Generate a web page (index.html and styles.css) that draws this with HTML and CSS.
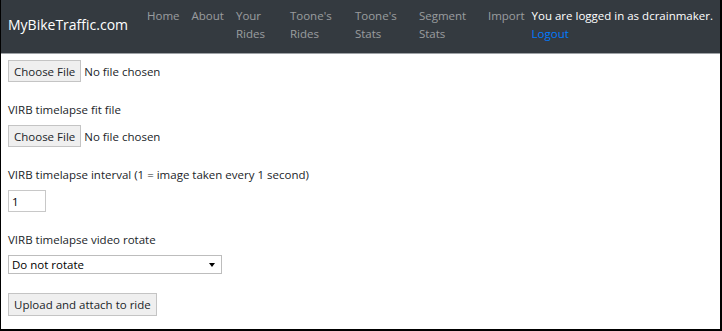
FILE: index.html
```html
<!DOCTYPE html>
<html lang="en">
<head>
    <meta charset="UTF-8">
    <title>MyBikeTraffic.com - Upload timelapse</title>
    <link rel="stylesheet" href="styles.css">
</head>
<body>
    <div class="frame">
        <!-- Top navigation -->
        <nav class="navbar">
            <a class="brand" href="#">MyBikeTraffic.com</a>
            <ul class="nav">
                <li><a class="nav-link" href="#">Home</a></li>
                <li><a class="nav-link" href="#">About</a></li>
                <li class="nav-wrap w-your"><a class="nav-link" href="#">Your Rides</a></li>
                <li class="nav-wrap w-rides"><a class="nav-link" href="#">Toone's Rides</a></li>
                <li class="nav-wrap w-stats"><a class="nav-link" href="#">Toone's Stats</a></li>
                <li class="nav-wrap w-segment"><a class="nav-link" href="#">Segment Stats</a></li>
                <li><a class="nav-link" href="#">Import</a></li>
            </ul>
            <div class="user">
                You are logged in as dcrainmaker.<br>
                <a class="logout" href="#">Logout</a>
            </div>
        </nav>

        <!-- Upload form -->
        <form class="upload-form" action="#" method="POST" enctype="multipart/form-data">
            <div class="form-group">
                <input type="file" name="video" class="file-input">
            </div>

            <div class="form-group">
                <label for="fit-file">VIRB timelapse fit file</label>
                <input type="file" name="fit" id="fit-file" class="file-input">
            </div>

            <div class="form-group">
                <label for="interval">VIRB timelapse interval (1 = image taken every 1 second)</label>
                <input type="text" name="interval" id="interval" class="num-input" value="1">
            </div>

            <div class="form-group">
                <label for="rotate">VIRB timelapse video rotate</label>
                <span class="select-wrap">
                    <select name="rotate" id="rotate" class="select">
                        <option>Do not rotate</option>
                        <option>Rotate 90</option>
                        <option>Rotate 180</option>
                        <option>Rotate 270</option>
                    </select>
                </span>
            </div>

            <button class="btn" type="submit">Upload and attach to ride</button>
        </form>
    </div>
</body>
</html>
```

FILE: styles.css
```css
:root {
    --nav-bg: #343a40;
    --nav-link: rgba(255, 255, 255, 0.5);
    --text: #212529;
    --link-blue: #007bff;
}

* {
    box-sizing: border-box;
    margin: 0;
    padding: 0;
}

body {
    background: #fff;
    color: var(--text);
    font-family: 'Open Sans', 'Noto Sans', sans-serif;
    font-size: 11.5px;
}

.frame {
    height: 331px;
    border-left: 1px solid #000;
    border-right: 2px solid #000;
    border-bottom: 2px solid #000;
    overflow: hidden;
}

/* navbar */
.navbar {
    display: flex;
    align-items: flex-start;
    background: var(--nav-bg);
    height: 54px;
    padding: 7px 0 0 7px;
    border-bottom: 1px solid #9ea2a6;
}

.brand {
    color: #fff;
    text-decoration: none;
    font-size: 14px;
    line-height: 36px;
    margin-right: 13px;
}

.nav {
    display: flex;
    list-style: none;
}

.nav-link {
    display: block;
    padding: 0 6px;
    color: var(--nav-link);
    text-decoration: none;
    line-height: 18px;
}

.nav-wrap .nav-link {
    padding-right: 0;
}

.w-your { width: 54px; }
.w-rides { width: 65px; }
.w-stats { width: 64px; }
.w-segment { width: 69px; }

.user {
    color: #fff;
    line-height: 18px;
    white-space: nowrap;
    margin-left: 1px;
}

.logout {
    color: var(--link-blue);
    text-decoration: none;
}

/* form */
.upload-form {
    padding: 6px 7px;
}

.form-group {
    margin-bottom: 19px;
}

.form-group label {
    display: block;
    line-height: 17px;
    margin-bottom: 7px;
}

.file-input {
    font: inherit;
    color: var(--text);
}

.file-input::file-selector-button {
    font: inherit;
    color: var(--text);
    height: 22px;
    padding: 0 5px;
    margin-right: 3px;
    background: #efefef;
    border: 1px solid #c4c4c4;
    border-radius: 0;
}

.num-input {
    font: inherit;
    width: 38px;
    height: 22px;
    padding: 0 3px;
    border: 1px solid #c8c8c8;
    color: #000;
}

.select-wrap {
    position: relative;
    display: inline-block;
}

.select {
    font: inherit;
    color: #000;
    width: 214px;
    height: 19px;
    padding: 0 3px;
    border: 1px solid #bdbdbd;
    background: #fff;
    appearance: none;
    border-radius: 0;
}

.select-wrap::after {
    content: '';
    position: absolute;
    right: 7px;
    top: 8px;
    border-left: 3px solid transparent;
    border-right: 3px solid transparent;
    border-top: 4px solid #000;
    pointer-events: none;
}

.btn {
    font: inherit;
    color: var(--text);
    height: 23px;
    padding: 0 5px;
    background: #efefef;
    border: 1px solid #c4c4c4;
    border-radius: 0;
}
```
